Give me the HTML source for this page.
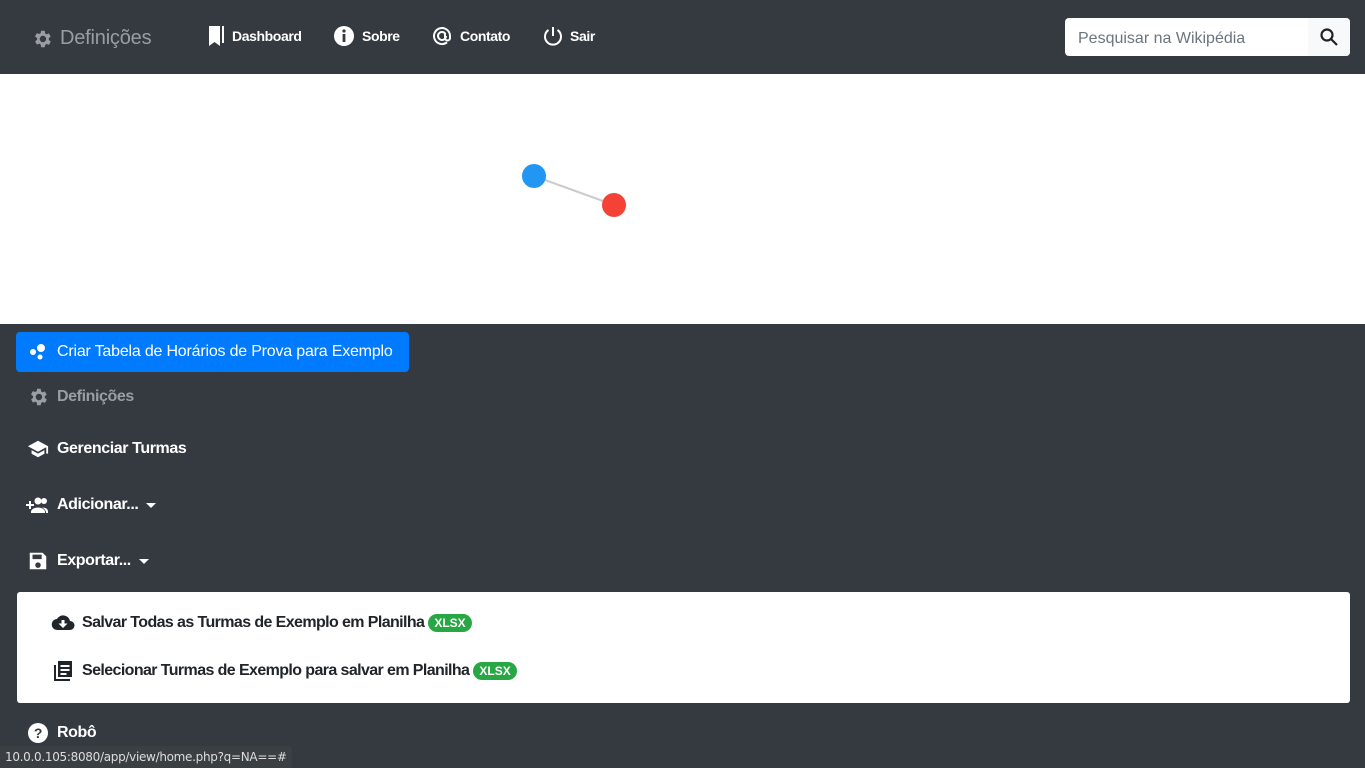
<!DOCTYPE html>
<html><head><meta charset="utf-8"><style>
*{box-sizing:border-box;margin:0;padding:0}
body{width:1365px;height:768px;background:#343a40;font-family:"Liberation Sans",sans-serif;overflow:hidden;position:relative;color:#fff}
.nav{height:74px;position:relative}
.abs{position:absolute;display:flex;align-items:center}
.brand{left:31px;top:27px;font-size:20px;color:#9a9da1;letter-spacing:-0.2px}
.ni{font-size:14px;font-weight:bold;color:#fff;top:25px;letter-spacing:-0.4px}
.ni svg,.brand svg{margin-right:7px}
.search{left:1065px;top:18px;width:285px;height:38px;background:#fff;border-radius:4px;overflow:hidden}
.search span{color:#6c757d;font-size:16px;padding-left:13px;flex:1;padding-top:3px}
.search .b{width:42px;height:38px;background:#f8f9fa;display:flex;align-items:center;justify-content:center}
.canvas{position:absolute;top:74px;left:0;width:1365px;height:250px;background:#fff}
.btn{left:16px;top:332px;width:393px;height:40px;background:#007bff;border-radius:4px;font-size:16px;padding-left:13px;letter-spacing:-0.2px}
.item{left:27px;font-size:16px;font-weight:bold;letter-spacing:-0.4px}
.item svg{margin-right:8px}
.panel{position:absolute;left:17px;top:592px;width:1333px;height:111px;background:#fff;border-radius:3px;color:#212529}
.row{position:absolute;left:34px;display:flex;align-items:center;font-size:16px;font-weight:bold;letter-spacing:-0.6px}
.row svg{margin-right:7px}
.badge{background:#28a745;color:#fff;font-size:12px;font-weight:bold;border-radius:9px;padding:2px 6px;margin-left:4px;letter-spacing:0}
.status{position:absolute;left:0;top:746px;height:22px;background:#3a3f44;color:#ddd;font-size:12px;padding:4px 5px;border-radius:0 4px 0 0;font-family:"DejaVu Sans",sans-serif;letter-spacing:-0.3px}
.caret{display:inline-block;width:0;height:0;border-left:5px solid transparent;border-right:5px solid transparent;border-top:5px solid #fff;margin-left:8px}
</style></head><body>
<div class="nav">
 <div class="abs brand"><svg width="22" height="22" viewBox="0 0 24 24"><path fill="#9a9da1" d="M19.4 13a7.5 7.5 0 000-2l2.1-1.6-2-3.5-2.5 1a7 7 0 00-1.7-1L15 3h-4l-.4 2.6a7 7 0 00-1.7 1l-2.5-1-2 3.5L6.6 11a7.5 7.5 0 000 2l-2.1 1.6 2 3.5 2.5-1a7 7 0 001.7 1L11 21h4l.4-2.6a7 7 0 001.7-1l2.5 1 2-3.5zM13 15.5a3.5 3.5 0 110-7 3.5 3.5 0 010 7z"/></svg>Definições</div>
 <div class="abs ni" style="left:205px"><svg width="20" height="22" viewBox="0 0 20 22"><path fill="#fff" d="M4 1h11v20l-5.5-4L4 21zM17 1h2v17h-2z"/></svg>Dashboard</div>
 <div class="abs ni" style="left:333px"><svg width="22" height="22" viewBox="0 0 22 22"><circle cx="11" cy="11" r="10" fill="#fff"/><rect x="9.6" y="9" width="2.8" height="8" fill="#343a40"/><circle cx="11" cy="6" r="1.6" fill="#343a40"/></svg>Sobre</div>
 <div class="abs ni" style="left:431px"><svg width="22" height="22" viewBox="0 0 22 22" fill="none" stroke="#fff" stroke-width="2"><path d="M15 11a4 4 0 11-1-2.7V13a2.5 2.5 0 005 0v-2a8 8 0 10-3 6.3"/></svg>Contato</div>
 <div class="abs ni" style="left:543px"><svg width="20" height="22" viewBox="0 0 20 22" fill="none" stroke="#fff" stroke-width="2"><path d="M10 2v9M5.5 5a8 8 0 109 0"/></svg>Sair</div>
 <div class="abs search"><span>Pesquisar na Wikipédia</span><div class="b"><svg width="20" height="20" viewBox="0 0 20 20" fill="none" stroke="#222" stroke-width="2.2"><circle cx="8" cy="8" r="5.5"/><path d="M12 12l6 6"/></svg></div></div>
</div>
<div class="canvas"><svg width="1365" height="250"><line x1="534" y1="102" x2="614" y2="131" stroke="#ccc" stroke-width="2"/><circle cx="534" cy="102" r="12" fill="#2196f3"/><circle cx="614" cy="131" r="12" fill="#f44336"/></svg></div>
<div class="abs btn"><svg width="18" height="18" viewBox="0 0 18 18" style="margin-right:10px"><circle cx="4" cy="9" r="3" fill="#fff"/><circle cx="12" cy="5" r="4" fill="#fff"/><circle cx="11" cy="14" r="2.5" fill="#fff"/></svg>Criar Tabela de Horários de Prova para Exemplo</div>
<div class="abs item" style="top:386px;color:#9a9da1"><svg width="22" height="22" viewBox="0 0 24 24"><path fill="#9a9da1" d="M19.4 13a7.5 7.5 0 000-2l2.1-1.6-2-3.5-2.5 1a7 7 0 00-1.7-1L15 3h-4l-.4 2.6a7 7 0 00-1.7 1l-2.5-1-2 3.5L6.6 11a7.5 7.5 0 000 2l-2.1 1.6 2 3.5 2.5-1a7 7 0 001.7 1L11 21h4l.4-2.6a7 7 0 001.7-1l2.5 1 2-3.5zM13 15.5a3.5 3.5 0 110-7 3.5 3.5 0 010 7z"/></svg>Definições</div>
<div class="abs item" style="top:438px"><svg width="22" height="22" viewBox="0 0 24 24"><path fill="#fff" d="M12 3L1 9l11 6 9-4.9V17h2V9zM5 13.2v4L12 21l7-3.8v-4L12 17z"/></svg>Gerenciar Turmas</div>
<div class="abs item" style="top:494px;left:25px"><svg width="24" height="22" viewBox="0 0 24 22"><path fill="#fff" d="M1 10h3V7h2v3h3v2H6v3H4v-3H1z"/><circle cx="13" cy="7" r="3.5" fill="#fff"/><circle cx="19" cy="7" r="3" fill="#fff"/><path fill="#fff" d="M6 18c0-3 4-4.5 7-4.5s7 1.5 7 4.5v1H6zM17 13.5c3 0 6 1 6 4v1.5h-2c0-2-1-4-4-5.5z"/></svg>Adicionar...<span class="caret"></span></div>
<div class="abs item" style="top:550px"><svg width="22" height="22" viewBox="0 0 24 24"><path fill="#fff" d="M3 3h14l4 4v14H3zM6 5v5h10V5zM12 13.5a3 3 0 100 6 3 3 0 000-6z"/></svg>Exportar...<span class="caret"></span></div>
<div class="panel">
 <div class="row" style="top:21px"><svg width="24" height="20" viewBox="0 0 24 20"><path fill="#212529" d="M19 8A7 7 0 006 6a5.5 5.5 0 00.5 11H19a4.5 4.5 0 000-9zm-7 7l-4.5-4.5H10.5V7h3v3.5h3z"/></svg>Salvar Todas as Turmas de Exemplo em Planilha<span class="badge">XLSX</span></div>
 <div class="row" style="top:68px"><svg width="24" height="22" viewBox="0 0 24 22"><path fill="#212529" d="M3 5h2v14h14v2H3zM7 1h14v16H7zm2.5 4v2h9V5zm0 4v2h9V9zm0 4v2h6v-2z"/></svg>Selecionar Turmas de Exemplo para salvar em Planilha<span class="badge">XLSX</span></div>
</div>
<div class="abs item" style="top:722px"><svg width="22" height="22" viewBox="0 0 22 22"><circle cx="11" cy="11" r="10" fill="#fff"/><text x="11" y="16" text-anchor="middle" font-size="14" font-weight="bold" fill="#343a40" font-family="Liberation Sans">?</text></svg>Robô</div>
<div class="status">10.0.0.105:8080/app/view/home.php?q=NA==#</div>
</body></html>
